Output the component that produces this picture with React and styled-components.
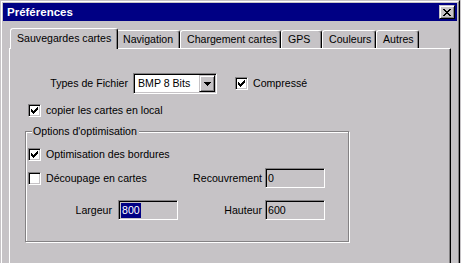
import React from "react";
import styled, { createGlobalStyle } from "styled-components";

const GRAY = "#c6c3c6";
const DARK = "#848284";
const NAVY = "#000084";

const Global = createGlobalStyle`
  html, body { margin: 0; padding: 0; background: ${GRAY}; overflow: hidden; }
  body { font-family: "Liberation Sans", Arial, sans-serif; font-size: 10.6px; color: #000; }
  * { box-sizing: border-box; }
`;

const Window = styled.div`
  width: 460px;
  height: 263px;
  border: 1px solid;
  border-bottom: none;
  border-color: ${GRAY} #000 #000 ${GRAY};
  background: ${GRAY};
`;

const WindowInner = styled.div`
  height: 100%;
  border: 1px solid;
  border-bottom: none;
  border-color: #fff ${DARK} ${DARK} #fff;
  padding: 1px 1px 0 1px;
  display: flex;
  flex-direction: column;
`;

const TitleBar = styled.div`
  height: 18px;
  flex: none;
  background: ${NAVY};
  display: flex;
  align-items: center;
  justify-content: space-between;
  padding: 0 2px 0 4px;
`;

const Title = styled.span`
  color: #fff;
  font-weight: bold;
  font-size: 11.5px;
  line-height: 14px;
`;

const RaisedButton = styled.div`
  width: ${(p) => p.$w}px;
  height: ${(p) => p.$h}px;
  background: ${GRAY};
  border: 1px solid;
  border-color: ${GRAY} #000 #000 ${GRAY};
  box-shadow: inset 1px 1px 0 #fff, inset -1px -1px 0 ${DARK};
  display: flex;
  align-items: center;
  justify-content: center;
  flex: none;
`;

const Body = styled.div`
  flex: 1;
  min-height: 0;
  display: flex;
  flex-direction: column;
  padding: 7px 6px 0 6px;
`;

const TabRow = styled.div`
  display: flex;
  align-items: flex-end;
  padding-left: 3px;
  height: 20px;
  flex: none;
`;

const Tab = styled.div`
  position: relative;
  width: ${(p) => (p.$active ? p.$w + 4 : p.$w)}px;
  height: ${(p) => (p.$active ? 21 : 18)}px;
  margin: ${(p) => (p.$active ? "0 -2px -1px -2px" : "0")};
  z-index: ${(p) => (p.$active ? 1 : 0)};
  background: ${GRAY};
  border: 1px solid;
  border-bottom: none;
  border-color: #fff #000 transparent #fff;
  border-radius: 3px 3px 0 0;
  box-shadow: inset -1px 0 0 ${DARK};
  padding: ${(p) => (p.$active ? "3px 0 0 6px" : "2px 0 0 6px")};
  line-height: 13px;
  white-space: nowrap;
`;

const Panel = styled.div`
  flex: 1;
  min-height: 0;
  border: 1px solid;
  border-bottom: none;
  border-color: #fff #000 transparent #fff;
  box-shadow: inset -1px 0 0 ${DARK};
  padding: 24px 0 0 15px;
  display: flex;
  flex-direction: column;
  align-items: flex-start;
`;

const FileRow = styled.div`
  display: flex;
  align-items: center;
  height: 21px;
`;

const RightLabel = styled.span`
  width: ${(p) => p.$w}px;
  text-align: right;
  padding-right: ${(p) => p.$pr || 0}px;
  white-space: nowrap;
  line-height: 13px;
`;

const Select = styled.div`
  width: 84px;
  height: 21px;
  margin: 0 18px 0 5px;
  background: #fff;
  border: 1px solid;
  border-color: ${DARK} #fff #fff ${DARK};
  box-shadow: inset 1px 1px 0 #000, inset -1px -1px 0 ${GRAY};
  padding: 1px 1px 1px 3px;
  display: flex;
  align-items: center;
  justify-content: space-between;
`;

const SelectText = styled.span`
  line-height: 13px;
  padding-left: 1px;
`;

const CheckItem = styled.label`
  display: flex;
  align-items: center;
  gap: 5px;
  padding-left: ${(p) => p.$pl || 0}px;
  margin-top: ${(p) => p.$mt || 0}px;
  height: 15px;
  white-space: nowrap;
  line-height: 13px;
`;

const Box = styled.span`
  width: 13px;
  height: 13px;
  flex: none;
  background: #fff;
  border: 1px solid;
  border-color: ${DARK} #fff #fff ${DARK};
  box-shadow: inset 1px 1px 0 #000, inset -1px -1px 0 ${GRAY};
  display: flex;
  align-items: center;
  justify-content: center;
`;

const Group = styled.div`
  position: relative;
  margin-top: 13px;
  width: 324px;
  border: 1px solid ${DARK};
  box-shadow: inset 1px 1px 0 #fff, 1px 1px 0 #fff;
  padding: 12px 0 21px 0;
`;

const Legend = styled.span`
  position: absolute;
  top: -7px;
  left: 6px;
  padding: 0 2px 0 1px;
  background: ${GRAY};
  line-height: 13px;
  white-space: nowrap;
`;

const GroupRow = styled.div`
  display: grid;
  grid-template-columns: 92px 60px 87px 60px;
  align-items: center;
  height: 20px;
  margin-top: ${(p) => p.$mt || 0}px;
`;

const Span2 = styled.div`
  grid-column: span 2;
  display: flex;
  align-items: center;
`;

const TextBox = styled.div`
  width: 60px;
  height: 20px;
  background: ${GRAY};
  border: 1px solid;
  border-color: ${DARK} #fff #fff ${DARK};
  box-shadow: inset 1px 1px 0 #000, inset -1px -1px 0 ${GRAY};
  padding: 1px 1px 1px 2px;
  display: flex;
  align-items: center;
  line-height: 13px;
`;

const Selected = styled.span`
  background: ${NAVY};
  color: #fff;
  padding: 1px;
  line-height: 13px;
`;

const CheckMark = () => (
  <svg width="7" height="7" viewBox="0 0 7 7" shapeRendering="crispEdges">
    <g fill="#000">
      <rect x="6" y="0" width="1" height="1" />
      <rect x="5" y="1" width="2" height="1" />
      <rect x="0" y="2" width="1" height="1" />
      <rect x="4" y="2" width="3" height="1" />
      <rect x="0" y="3" width="2" height="1" />
      <rect x="3" y="3" width="3" height="1" />
      <rect x="0" y="4" width="5" height="1" />
      <rect x="1" y="5" width="3" height="1" />
      <rect x="2" y="6" width="1" height="1" />
    </g>
  </svg>
);

const CloseGlyph = () => (
  <svg width="8" height="7" viewBox="0 0 8 7" shapeRendering="crispEdges">
    <g fill="#000">
      <rect x="0" y="0" width="2" height="1" />
      <rect x="6" y="0" width="2" height="1" />
      <rect x="1" y="1" width="2" height="1" />
      <rect x="5" y="1" width="2" height="1" />
      <rect x="2" y="2" width="4" height="1" />
      <rect x="3" y="3" width="2" height="1" />
      <rect x="2" y="4" width="4" height="1" />
      <rect x="1" y="5" width="2" height="1" />
      <rect x="5" y="5" width="2" height="1" />
      <rect x="0" y="6" width="2" height="1" />
      <rect x="6" y="6" width="2" height="1" />
    </g>
  </svg>
);

const DownArrow = () => (
  <svg width="7" height="4" viewBox="0 0 7 4" shapeRendering="crispEdges">
    <g fill="#000">
      <rect x="0" y="0" width="7" height="1" />
      <rect x="1" y="1" width="5" height="1" />
      <rect x="2" y="2" width="3" height="1" />
      <rect x="3" y="3" width="1" height="1" />
    </g>
  </svg>
);

const Check = ({ checked, children, ...rest }) => (
  <CheckItem {...rest}>
    <Box>{checked && <CheckMark />}</Box>
    <span>{children}</span>
  </CheckItem>
);

const tabs = [
  { label: "Sauvegardes cartes", w: 104, active: true },
  { label: "Navigation", w: 64 },
  { label: "Chargement cartes", w: 101 },
  { label: "GPS", w: 41 },
  { label: "Couleurs", w: 54 },
  { label: "Autres", w: 43 },
];

export default function App() {
  return (
    <>
      <Global />
      <Window>
        <WindowInner>
          <TitleBar>
            <Title>Préférences</Title>
            <RaisedButton $w={16} $h={14}>
              <CloseGlyph />
            </RaisedButton>
          </TitleBar>
          <Body>
            <TabRow>
              {tabs.map((t) => (
                <Tab key={t.label} $w={t.w} $active={t.active}>
                  {t.label}
                </Tab>
              ))}
            </TabRow>
            <Panel>
              <FileRow>
                <RightLabel $w={103}>Types de Fichier</RightLabel>
                <Select>
                  <SelectText>BMP 8 Bits</SelectText>
                  <RaisedButton $w={16} $h={17}>
                    <DownArrow />
                  </RaisedButton>
                </Select>
                <Check checked>Compressé</Check>
              </FileRow>
              <Check checked $pl={3} $mt={9}>
                copier les cartes en local
              </Check>
              <Group>
                <Legend>Options d'optimisation</Legend>
                <GroupRow>
                  <Span2>
                    <Check checked $pl={2}>
                      Optimisation des bordures
                    </Check>
                  </Span2>
                </GroupRow>
                <GroupRow $mt={4}>
                  <Span2>
                    <Check $pl={2}>Découpage en cartes</Check>
                  </Span2>
                  <RightLabel $w={87} $pr={3}>Recouvrement</RightLabel>
                  <TextBox>0</TextBox>
                </GroupRow>
                <GroupRow $mt={12}>
                  <RightLabel $w={92} $pr={6}>Largeur</RightLabel>
                  <TextBox>
                    <Selected>800</Selected>
                  </TextBox>
                  <RightLabel $w={87} $pr={3}>Hauteur</RightLabel>
                  <TextBox>600</TextBox>
                </GroupRow>
              </Group>
            </Panel>
          </Body>
        </WindowInner>
      </Window>
    </>
  );
}
